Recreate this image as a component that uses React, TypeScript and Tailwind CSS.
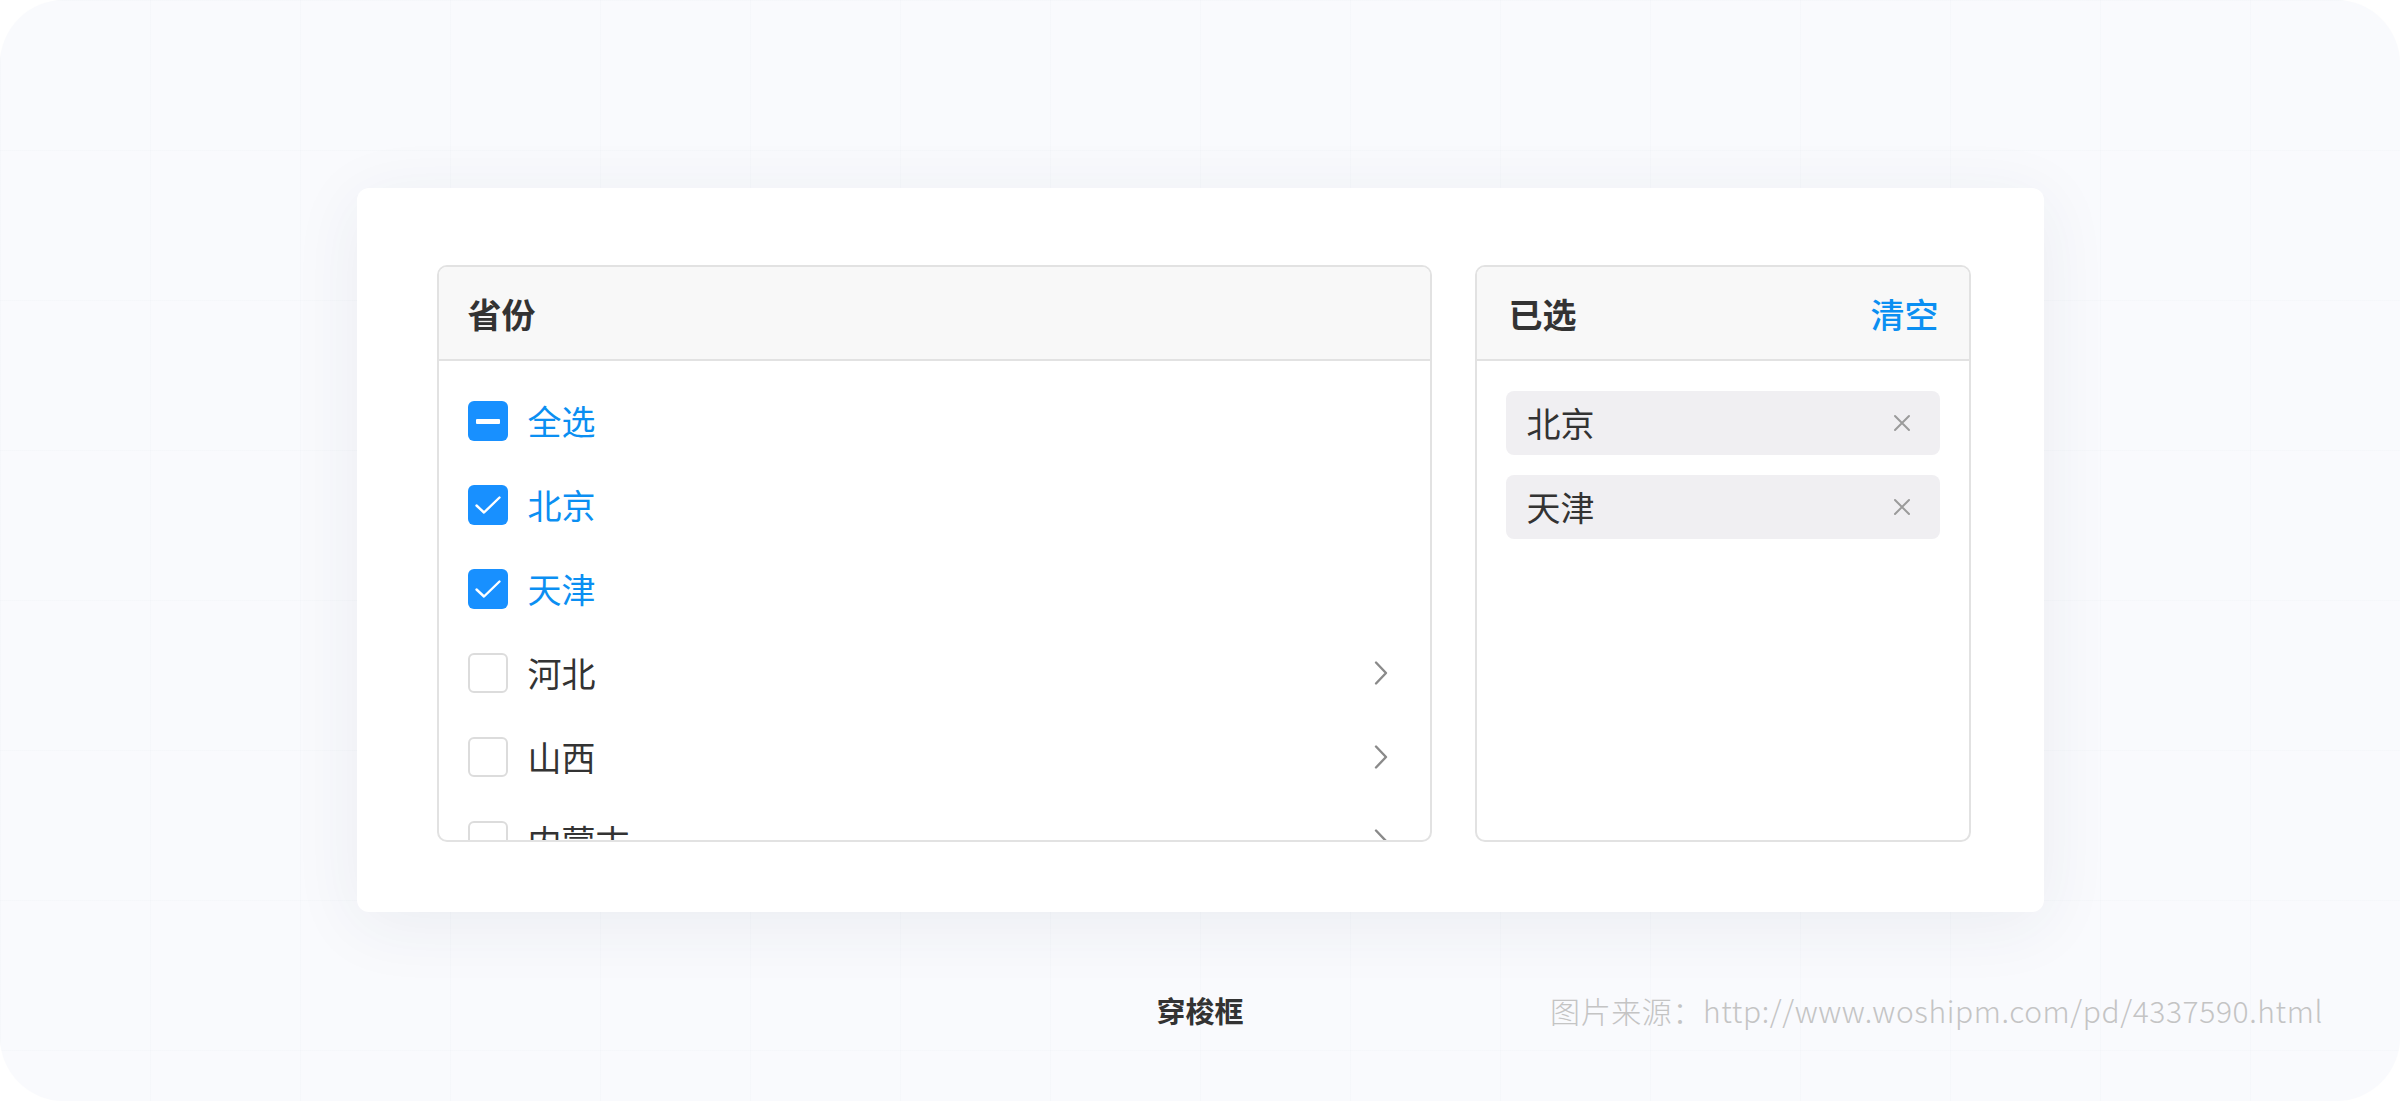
import React from "react";

type Item = { name: string; state: "checked" | "partial" | "none"; hasChildren: boolean };

const ITEMS: Item[] = [
  { name: "全选", state: "partial", hasChildren: false },
  { name: "北京", state: "checked", hasChildren: false },
  { name: "天津", state: "checked", hasChildren: false },
  { name: "河北", state: "none", hasChildren: true },
  { name: "山西", state: "none", hasChildren: true },
  { name: "内蒙古", state: "none", hasChildren: true },
];

const SELECTED = ["北京", "天津"];

const font = { fontFamily: "'Noto Sans CJK SC', 'Noto Sans', sans-serif" };

function Checkbox({ state }: { state: Item["state"] }) {
  if (state === "none") {
    return <span className="block w-[40px] h-[40px] shrink-0 rounded-[6px] border-2 border-[#dcdcdc] bg-white" />;
  }
  return (
    <span className="flex items-center justify-center w-[40px] h-[40px] shrink-0 rounded-[6px] bg-[#1890ff]">
      {state === "partial" ? (
        <span className="block w-[24px] h-[5px] rounded-[1px] bg-white" />
      ) : (
        <svg width="28" height="28" viewBox="0 0 28 28" fill="none">
          <path d="M2.5 14.5 L10 21.5 L25.5 6.5" stroke="#fff" strokeWidth="2.4" strokeLinecap="round" strokeLinejoin="round" />
        </svg>
      )}
    </span>
  );
}

function Chevron() {
  return (
    <svg width="16" height="26" viewBox="0 0 16 26" fill="none">
      <path d="M3 2.5 L13 13 L3 23.5" stroke="#8a8a8a" strokeWidth="2.4" strokeLinecap="round" strokeLinejoin="round" />
    </svg>
  );
}

function Close() {
  return (
    <svg width="18" height="18" viewBox="0 0 18 18" fill="none">
      <path d="M2 2 L16 16 M16 2 L2 16" stroke="#9b9b9b" strokeWidth="2" strokeLinecap="round" />
    </svg>
  );
}

export default function App() {
  return (
    <div className="bg-white w-[2400px] h-[1101px]" style={font}>
      <div className="relative w-full h-full rounded-[64px] overflow-hidden bg-[#f9fafd] bg-[linear-gradient(to_right,rgba(230,234,242,0.18)_1px,transparent_1px),linear-gradient(to_bottom,rgba(230,234,242,0.18)_1px,transparent_1px)] bg-[size:150px_150px] flex flex-col items-center">
        {/* Card */}
        <div className="mt-[188px] w-[1687px] h-[724px] bg-white rounded-[12px] shadow-[0_12px_70px_rgba(40,50,80,0.07)] flex gap-[43px] pt-[77px] pb-[70px] pl-[80px] pr-[73px]">
          {/* Left panel */}
          <div className="flex-1 flex flex-col border-2 border-[#e2e2e2] rounded-[10px] overflow-hidden">
            <div className="h-[94px] shrink-0 bg-[#f8f8f8] border-b-2 border-[#e2e2e2] flex items-center px-[29px]">
              <span className="text-[34px] font-bold text-[#333]">省份</span>
            </div>
            <div className="flex-1 overflow-hidden pt-[18px]">
              {ITEMS.map((it) => (
                <div key={it.name} className="h-[84px] flex items-center pl-[29px] pr-[41px]">
                  <Checkbox state={it.state} />
                  <span className={`ml-[20px] flex-1 text-[34px] leading-none ${it.state === "none" ? "text-[#333]" : "text-[#0b8ff2]"}`}>
                    {it.name}
                  </span>
                  {it.hasChildren && <Chevron />}
                </div>
              ))}
            </div>
          </div>

          {/* Right panel */}
          <div className="w-[496px] flex flex-col border-2 border-[#e2e2e2] rounded-[10px] overflow-hidden">
            <div className="h-[94px] shrink-0 bg-[#f8f8f8] border-b-2 border-[#e2e2e2] flex items-center justify-between pl-[32px] pr-[30px]">
              <span className="text-[34px] font-bold text-[#333]">已选</span>
              <span className="text-[34px] font-medium text-[#0b8ff2]">清空</span>
            </div>
            <div className="flex flex-col gap-[20px] pt-[30px] px-[29px]">
              {SELECTED.map((s) => (
                <div key={s} className="h-[64px] rounded-[8px] bg-[#f0eff2] flex items-center justify-between pl-[21px] pr-[29px]">
                  <span className="text-[34px] text-[#333] leading-none">{s}</span>
                  <Close />
                </div>
              ))}
            </div>
          </div>
        </div>

        {/* Caption */}
        <div className="w-full grid grid-cols-[1fr_auto_1fr] items-center mt-[76px]">
          <div />
          <span className="text-[29px] font-bold text-[#333]">穿梭框</span>
          <span className="justify-self-end pr-[77px] text-[30px] tracking-[0.6px] font-light text-[#c4c4c4]">
            图片来源：http://www.woshipm.com/pd/4337590.html
          </span>
        </div>
      </div>
    </div>
  );
}
